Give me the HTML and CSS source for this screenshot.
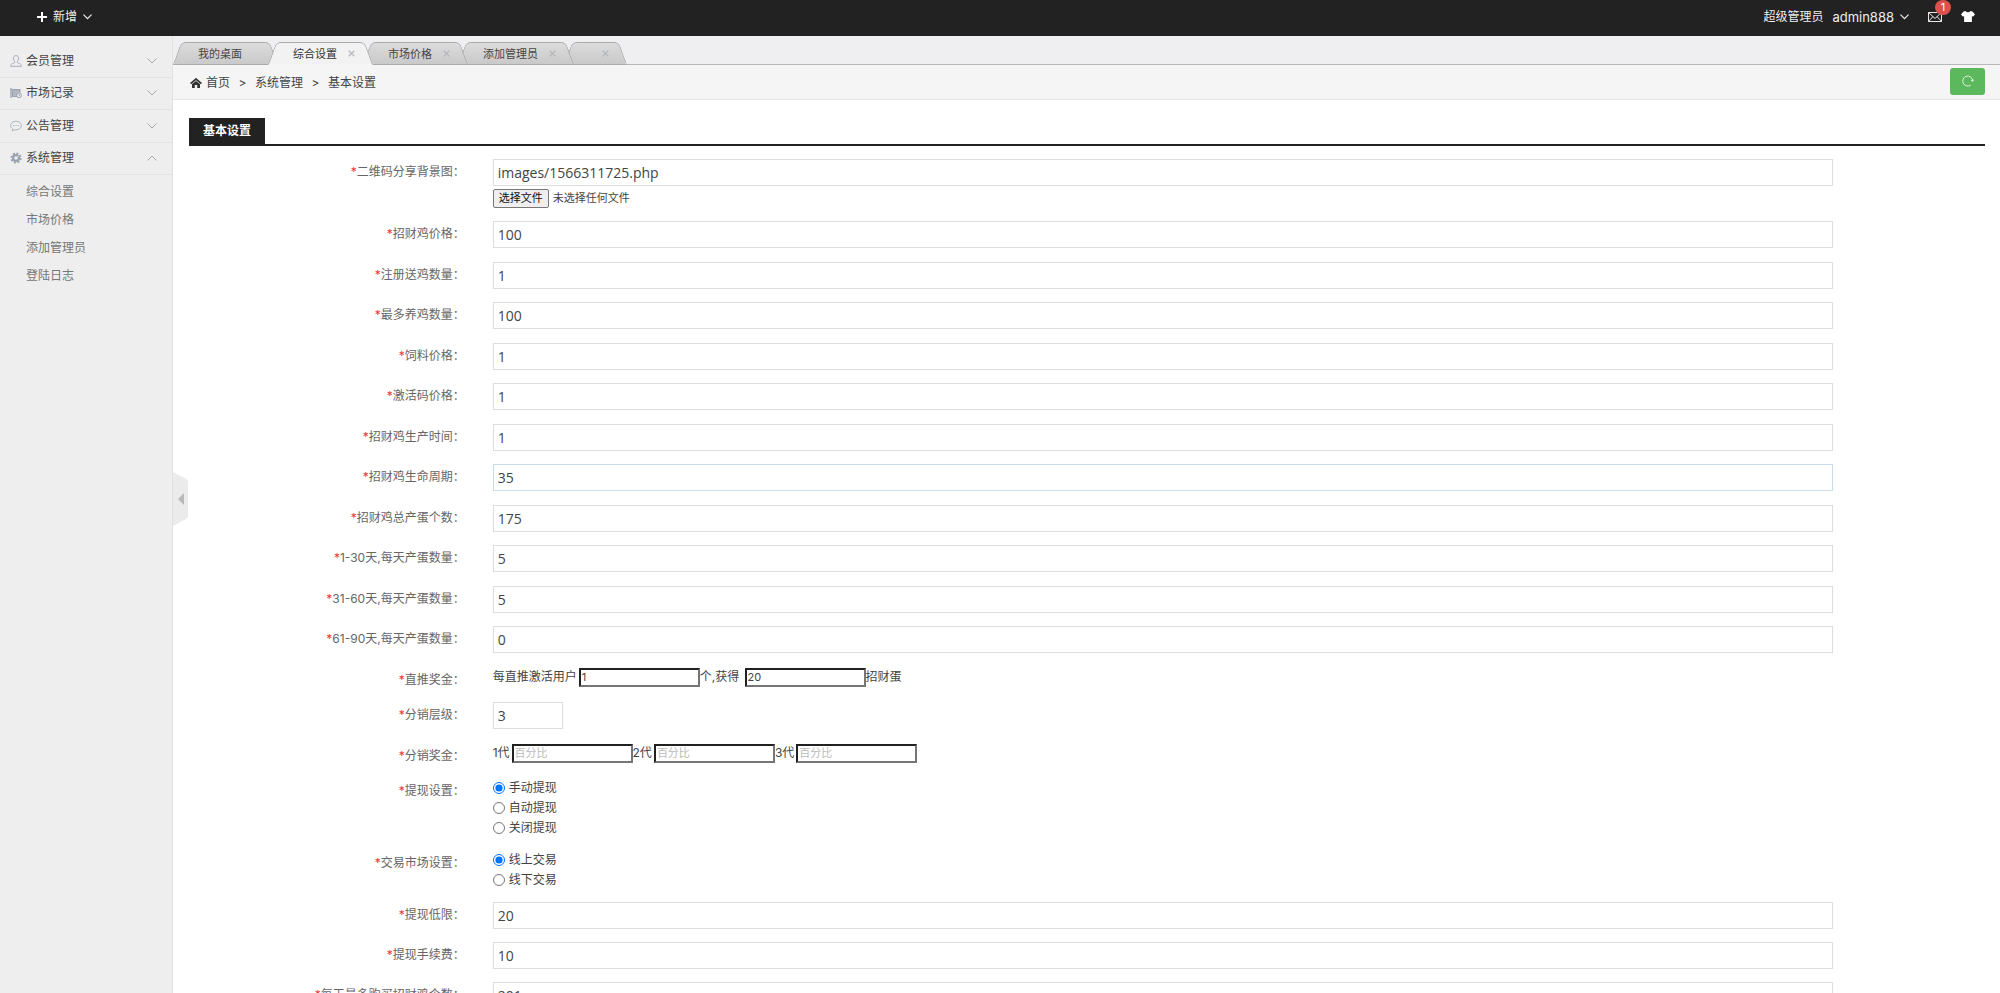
FILE: index.html
```html
<!DOCTYPE html>
<html lang="zh-CN">
<head>
<meta charset="utf-8">
<title>基本设置</title>
<link rel="stylesheet" href="styles.css">
</head>
<body>
<header class="topbar">
  <button class="top-add" type="button">
    <svg width="10" height="10" viewBox="0 0 10 10"><path d="M5 0v10M0 5h10" stroke="#fff" stroke-width="2"/></svg>
    <span>新增</span>
    <svg width="9" height="6" viewBox="0 0 9 6"><path d="M.5.7l4 4 4-4" fill="none" stroke="#eee" stroke-width="1.2"/></svg>
  </button>
  <div class="top-user">
    <span>超级管理员</span>
    <a href="#" class="top-name">admin888
      <svg width="9" height="6" viewBox="0 0 9 6"><path d="M.5.7l4 4 4-4" fill="none" stroke="#eee" stroke-width="1.2"/></svg>
    </a>
    <a href="#" class="top-mail" aria-label="消息">
      <svg width="14" height="10" viewBox="0 0 14 10"><path d="M.5.5h13v9H.5zM.5.5L7 6.500l6.500-6M.5 9.500l4.500-5M13.500 9.500l-4.500-5" fill="none" stroke="#e8e8e8"/></svg>
      <span class="badge">1</span>
    </a>
    <a href="#" class="top-skin" aria-label="换肤">
      <svg width="14" height="11" viewBox="0 0 14 11"><path d="M4.300 0Q7 2.600 9.700 0L11.500.6 14 3.600 12 5.700 10.900 4.900V11H3.100V4.900L2 5.700 0 3.600 2.500.6z" fill="#fff"/></svg>
    </a>
  </div>
</header>
<div class="shell">
  <aside class="sidebar">
    <ul class="menu">
      <li><button type="button">
        <svg width="12" height="12" viewBox="0 0 12 12"><path d="M6 .6c-1.700 0-2.600 1.200-2.600 2.700S4.200 6 4.700 6.700c.2 1-.5 1.500-2.200 1.900C1.200 9 .6 9.700.6 11.300h10.800c0-1.600-.6-2.300-1.900-2.700-1.700-.4-2.400-.9-2.200-1.900.5-.7 1.300-1.900 1.300-3.400S7.700.6 6 .6z" fill="none" stroke="#a9afb8"/></svg>
        <span>会员管理</span>
        <svg class="arrow" width="10" height="6" viewBox="0 0 10 6"><path d="M.5.5L5 5 9.500.5" fill="none" stroke="#aaa"/></svg></button></li>
      <li><button type="button">
        <svg width="12" height="12" viewBox="0 0 12 12"><path d="M1 1v10" stroke="#9aa2ad" stroke-width="1.300"/><path d="M2 2h8.500v3.500H7V10H2z" fill="#9aa2ad"/><path d="M3 4h6M3 6h4M3 8h3" stroke="#eee" stroke-width=".6"/><circle cx="9" cy="8.300" r="2.400" fill="#eee" stroke="#9aa2ad"/><path d="M9 7v1.500h1" fill="none" stroke="#9aa2ad" stroke-width=".8"/></svg>
        <span>市场记录</span>
        <svg class="arrow" width="10" height="6" viewBox="0 0 10 6"><path d="M.5.5L5 5 9.500.5" fill="none" stroke="#aaa"/></svg></button></li>
      <li><button type="button">
        <svg width="12" height="12" viewBox="0 0 12 12"><path d="M6 1.200c-3 0-5.400 1.900-5.400 4.300 0 1.400.8 2.600 2 3.400L2.300 11l2.400-1.300c.4.100.8.100 1.300.1 3 0 5.400-1.900 5.400-4.300S9 1.200 6 1.200z" fill="none" stroke="#a9afb8" stroke-width=".9"/><path d="M3 5.500h1.200M5.400 5.500h1.200M7.800 5.500H9" stroke="#a9afb8" stroke-width="1.200"/></svg>
        <span>公告管理</span>
        <svg class="arrow" width="10" height="6" viewBox="0 0 10 6"><path d="M.5.5L5 5 9.500.5" fill="none" stroke="#aaa"/></svg></button></li>
      <li><button type="button" aria-expanded="true">
        <svg width="12" height="12" viewBox="0 0 12 12"><circle cx="6" cy="6" r="4.600" fill="none" stroke="#98a2b0" stroke-width="2" stroke-dasharray="1.900 1.700"/><circle cx="6" cy="6" r="2.900" fill="none" stroke="#98a2b0" stroke-width="2.200"/><path d="M6 6l3-2.500" stroke="#eee" stroke-width=".8"/></svg>
        <span>系统管理</span>
        <svg class="arrow" width="10" height="6" viewBox="0 0 10 6"><path d="M.5 5.500L5 1l4.500 4.500" fill="none" stroke="#aaa"/></svg></button></li>
    </ul>
    <ul class="submenu">
      <li><a href="#">综合设置</a></li>
      <li><a href="#">市场价格</a></li>
      <li><a href="#">添加管理员</a></li>
      <li><a href="#">登陆日志</a></li>
    </ul>
  </aside>
  <main class="main">
    <button class="collapse" type="button" aria-label="收起菜单">
      <svg width="15" height="54" viewBox="0 0 15 54"><path d="M0 0l13 7q2 1 2 3v34q0 2-2 3L0 54z" fill="#ebebeb"/><path d="M11 21v12l-6-6z" fill="#b8b8b8"/></svg>
    </button>
    <ul class="tabs">
      <li class="tab"><span>我的桌面</span><i class="close"></i></li>
      <li class="tab active"><span>综合设置</span><button type="button" class="close" aria-label="关闭"><svg width="7" height="7" viewBox="0 0 7 7"><path d="M.7.7l5.600 5.600M6.300.7L.7 6.300" stroke="#bbbec2" stroke-width="1.500"/></svg></button></li>
      <li class="tab"><span>市场价格</span><button type="button" class="close" aria-label="关闭"><svg width="7" height="7" viewBox="0 0 7 7"><path d="M.7.7l5.600 5.600M6.300.7L.7 6.300" stroke="#b2b5ba" stroke-width="1.200"/></svg></button></li>
      <li class="tab"><span>添加管理员</span><button type="button" class="close" aria-label="关闭"><svg width="7" height="7" viewBox="0 0 7 7"><path d="M.7.7l5.600 5.600M6.300.7L.7 6.300" stroke="#b2b5ba" stroke-width="1.200"/></svg></button></li>
      <li class="tab"><span></span><button type="button" class="close" aria-label="关闭"><svg width="7" height="7" viewBox="0 0 7 7"><path d="M.7.7l5.600 5.600M6.300.7L.7 6.300" stroke="#b2b5ba" stroke-width="1.200"/></svg></button></li>
    </ul>
    <nav class="crumbs">
      <svg width="12" height="10" viewBox="0 0 12 10"><path d="M.5 5.600L6 1l5.500 4.600" fill="none" stroke="#333" stroke-width="1.700"/><path d="M2 6.100L6 2.900l4 3.200V10H7.200V7H4.800v3H2z" fill="#333"/></svg>
      <a href="#">首页</a><span class="sep">&gt;</span><span>系统管理</span><span class="sep">&gt;</span><span>基本设置</span>
      <button class="refresh" type="button" aria-label="刷新"><svg width="12" height="12" viewBox="0 0 12 12"><path d="M8.600 10.200A5 5 0 1 1 10.700 5.200" fill="none" stroke="#e4f5e4"/><path d="M8.800 5l3.200-.2-1.400 2.200z" fill="#e4f5e4"/></svg></button>
    </nav>
    <form class="content">
      <div class="heading"><h1>基本设置</h1></div>
      <div class="row first">
        <label for="f0"><em>*</em>二维码分享背景图：</label>
        <div class="ctl">
          <input class="text" id="f0" type="text" value="images/1566311725.php">
          <div class="file"><input id="file" type="file"><label for="file" class="filebtn">选择文件</label><span>未选择任何文件</span></div>
        </div>
      </div>
      <div class="fields">
        <div class="row"><label for="f1"><em>*</em>招财鸡价格：</label><div class="ctl"><input class="text" id="f1" type="text" value="100"></div></div>
        <div class="row"><label for="f2"><em>*</em>注册送鸡数量：</label><div class="ctl"><input class="text" id="f2" type="text" value="1"></div></div>
        <div class="row"><label for="f3"><em>*</em>最多养鸡数量：</label><div class="ctl"><input class="text" id="f3" type="text" value="100"></div></div>
        <div class="row"><label for="f4"><em>*</em>饲料价格：</label><div class="ctl"><input class="text" id="f4" type="text" value="1"></div></div>
        <div class="row"><label for="f5"><em>*</em>激活码价格：</label><div class="ctl"><input class="text" id="f5" type="text" value="1"></div></div>
        <div class="row"><label for="f6"><em>*</em>招财鸡生产时间：</label><div class="ctl"><input class="text" id="f6" type="text" value="1"></div></div>
        <div class="row"><label for="f7"><em>*</em>招财鸡生命周期：</label><div class="ctl"><input class="text hot" id="f7" type="text" value="35"></div></div>
        <div class="row"><label for="f8"><em>*</em>招财鸡总产蛋个数：</label><div class="ctl"><input class="text" id="f8" type="text" value="175"></div></div>
        <div class="row"><label for="f9"><em>*</em>1-30天,每天产蛋数量：</label><div class="ctl"><input class="text" id="f9" type="text" value="5"></div></div>
        <div class="row"><label for="f10"><em>*</em>31-60天,每天产蛋数量：</label><div class="ctl"><input class="text" id="f10" type="text" value="5"></div></div>
        <div class="row"><label for="f11"><em>*</em>61-90天,每天产蛋数量：</label><div class="ctl"><input class="text" id="f11" type="text" value="0"></div></div>
      </div>
      <div class="row bonus">
        <label for="b1"><em>*</em>直推奖金：</label>
        <div class="ctl inline"><span>每直推激活用户</span><input id="b1" type="text" value="1"><span>个,获得&nbsp;</span><input type="text" value="20" aria-label="招财蛋"><span>招财蛋</span></div>
      </div>
      <div class="row level">
        <label for="lv"><em>*</em>分销层级：</label>
        <div class="ctl"><input class="text short" id="lv" type="text" value="3"></div>
      </div>
      <div class="row bonus">
        <label for="g1"><em>*</em>分销奖金：</label>
        <div class="ctl inline"><span>1代</span><input id="g1" type="text" placeholder="百分比"><span>2代</span><input type="text" placeholder="百分比" aria-label="2代"><span>3代</span><input type="text" placeholder="百分比" aria-label="3代"></div>
      </div>
      <div class="row choice">
        <div class="lab"><em>*</em>提现设置：</div>
        <div class="ctl">
          <label><input type="radio" name="w" checked>手动提现</label>
          <label><input type="radio" name="w">自动提现</label>
          <label><input type="radio" name="w">关闭提现</label>
        </div>
      </div>
      <div class="row choice">
        <div class="lab"><em>*</em>交易市场设置：</div>
        <div class="ctl">
          <label><input type="radio" name="m" checked>线上交易</label>
          <label><input type="radio" name="m">线下交易</label>
        </div>
      </div>
      <div class="tail">
        <div class="row"><label for="t1"><em>*</em>提现低限：</label><div class="ctl"><input class="text" id="t1" type="text" value="20"></div></div>
        <div class="row"><label for="t2"><em>*</em>提现手续费：</label><div class="ctl"><input class="text" id="t2" type="text" value="10"></div></div>
        <div class="row"><label for="t3"><em>*</em>每天最多购买招财鸡个数：</label><div class="ctl"><input class="text" id="t3" type="text" value="201"></div></div>
      </div>
    </form>
  </main>
</div>
</body>
</html>
```

FILE: styles.css
```css
* { box-sizing: border-box; }
body {
  margin: 0;
  height: 100vh;
  display: flex;
  flex-direction: column;
  overflow: hidden;
  background: #fff;
  color: #444;
  font: 12px/20px Inter, "Noto Sans CJK SC", sans-serif;
}
ul { list-style: none; margin: 0; padding: 0; }
a { color: inherit; text-decoration: none; }
button { font: inherit; color: inherit; background: none; border: 0; padding: 0; }
svg { display: block; flex: none; }
em { color: #e33; font-style: normal; }

.topbar {
  flex: none;
  height: 36px;
  padding: 0 25px 3px 37px;
  display: flex;
  align-items: center;
  justify-content: space-between;
  background: #222;
  color: #eee;
}
.top-add { display: flex; align-items: center; gap: 6px; }
.top-user { display: flex; align-items: center; gap: 9px; }
.top-name { display: flex; align-items: center; gap: 6px; font-size: 13px; }
.top-mail { position: relative; margin: 0 10px; }
.badge {
  position: absolute;
  left: 7px;
  top: -12px;
  width: 16px;
  height: 15px;
  border-radius: 8px;
  background: #dd514c;
  color: #fff;
  font-size: 11px;
  line-height: 15px;
  text-align: center;
}

.shell { flex: 1; display: flex; min-height: 0; }
.sidebar {
  flex: none;
  width: 173px;
  padding-top: 9px;
  background: #eee;
  border-right: 1px solid #e2e2e2;
}
.menu { display: grid; grid-auto-rows: 1fr; min-height: 130px; }
.menu li { display: flex; border-bottom: 1px solid #e3e3e3; }
.menu button {
  flex: 1;
  display: flex;
  align-items: center;
  gap: 4px;
  padding: 0 15px 0 10px;
}
.arrow { margin-left: auto; }
.submenu { padding-top: 3px; }
.submenu a { display: block; padding-left: 26px; line-height: 28px; color: #777; }

.main { position: relative; flex: 1; min-width: 0; display: flex; flex-direction: column; }
.collapse { position: absolute; left: 0; top: 436px; }

.tabs {
  flex: none;
  display: flex;
  height: 29px;
  padding: 6px 0 0 4px;
  background: #efeef0;
  border-bottom: 1px solid #b8b8ba;
}
.tab {
  position: relative;
  display: flex;
  align-items: center;
  gap: 11px;
  height: 23px;
  margin-right: -2px;
  padding: 0 14px 0 21px;
  font-size: 11px;
  isolation: isolate;
}
.tab span { min-width: 2px; }
.tab:nth-child(3) { z-index: 3; }
.tab:nth-child(4) { z-index: 2; }
.tab.active { z-index: 4; }
.tab::before, .tab::after {
  content: "";
  position: absolute;
  z-index: -1;
  top: 0;
  bottom: 0;
  border: 1px solid #aaa;
  background: linear-gradient(#dcdcdc, #c9c9c9);
}
.tab::before { left: 0; right: 20px; border-right: 0; border-top-left-radius: 5px; transform: skewX(-20deg); }
.tab::after { left: 20px; right: 0; border-left: 0; border-top-right-radius: 5px; transform: skewX(20deg); }
.tab.active::before, .tab.active::after { background: #f2f2f3; border-bottom-color: #f5f5f5; }
.tab.active { color: #333; }
.close { width: 7px; }

.crumbs {
  flex: none;
  display: flex;
  align-items: center;
  height: 35px;
  padding: 2px 15px 0 17px;
  background: #f5f5f5;
  border-bottom: 1px solid #e5e5e5;
}
.crumbs a { margin-left: 4px; }
.sep { width: 25px; text-align: center; }
.refresh {
  display: grid;
  place-items: center;
  width: 35px;
  height: 27px;
  margin: 0 0 4px auto;
  border-radius: 3px;
  background: #5cb85c;
}

.content { flex: 1; min-height: 0; overflow: hidden; padding: 18px 15px 0 16px; }
.heading { display: flex; border-bottom: 2px solid #222; }
.heading h1 {
  margin: 0;
  padding: 0 14px;
  background: #222;
  color: #fff;
  font-size: 12px;
  line-height: 26px;
}
.row {
  display: grid;
  grid-template-columns: 2fr 9fr 1fr;
  align-items: start;
  margin: 0 -13px;
}
.row > label, .row > .lab { padding: 3px 15px 0 13px; color: #666; text-align: right; }
.ctl { padding: 0 13px; min-width: 0; }
.first { margin-top: 13px; }
.text {
  display: block;
  width: 100%;
  height: 27px;
  padding: 0 4px;
  border: 1px solid #ddd;
  background: #fff;
  color: #444;
  font: 14px "Open Sans", "Noto Sans CJK SC", sans-serif;
}
.hot { border-color: #c8dcea; }
.short { width: 70px; }
.file { display: flex; align-items: center; gap: 4px; padding-top: 2px; font-size: 11px; position: relative; }
.file input { position: absolute; width: 56px; height: 19px; opacity: 0; }
.filebtn {
  width: 56px;
  height: 19px;
  border: 1px solid #777;
  border-radius: 2px;
  background: #efefef;
  color: #111;
  line-height: 17px;
  text-align: center;
}
.fields {
  display: grid;
  align-content: space-between;
  min-height: 432px;
  margin-top: 13px;
}
.bonus { margin-top: 14px; }
.inline { display: flex; align-items: center; height: 20px; }
.inline span { margin-right: 2px; }
.inline input {
  width: 121px;
  height: 19px;
  padding: 1px;
  border: 2px inset #767676;
  background: #fff;
  color: #444;
  font: 11px Inter, "Noto Sans CJK SC", sans-serif;
}
.inline input::placeholder { color: #bbb; }
.level { margin-top: 12px; }
.choice { margin-top: 12px; }
.choice .ctl label { display: flex; align-items: center; gap: 4px; }
.choice input { width: 12px; height: 12px; margin: 0; accent-color: #0075ff; }
.tail { display: grid; gap: 13px; margin-top: 12px; }
```
